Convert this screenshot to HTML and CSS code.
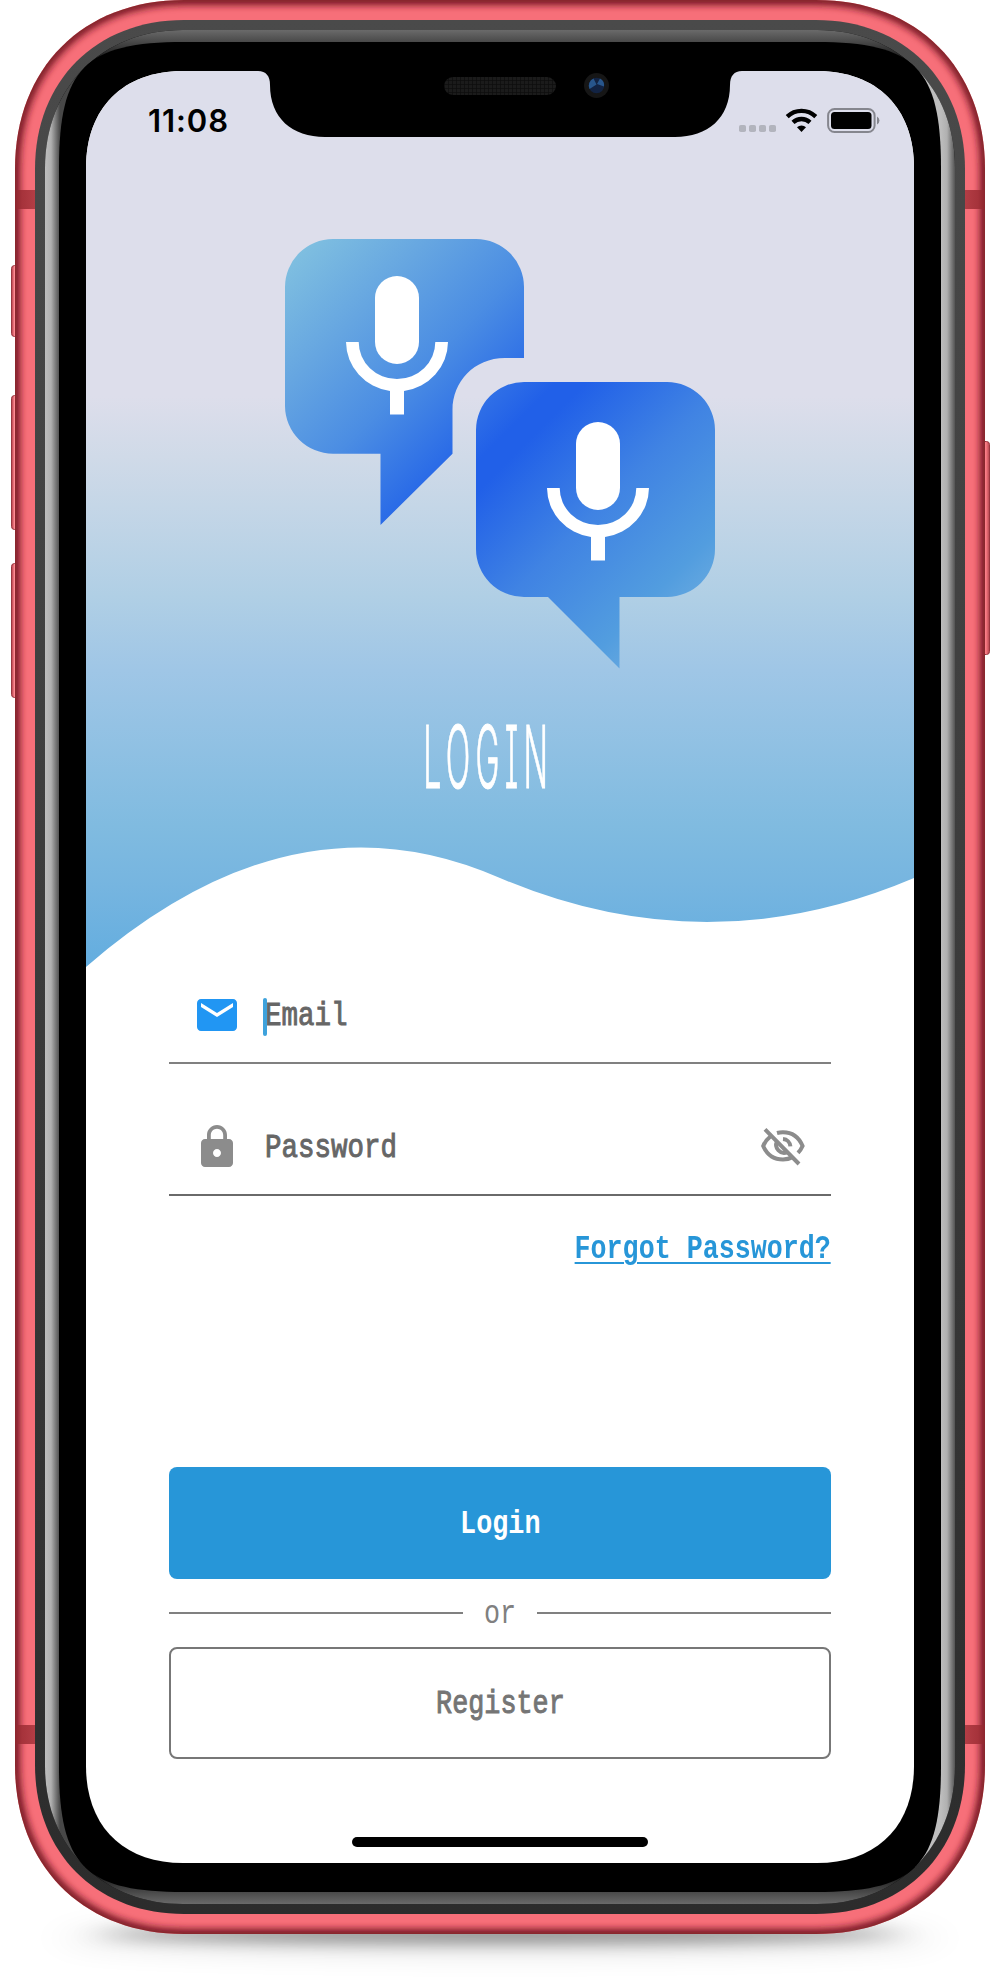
FILE: index.html
```html
<!DOCTYPE html>
<html lang="en">
<head>
<meta charset="utf-8">
<title>Login</title>
<link rel="stylesheet" href="styles.css">
</head>
<body>
<div class="phone">
  <svg class="frame" viewBox="0 0 1004 1986" aria-hidden="true">
    <defs>
      <linearGradient id="ring" x1="0" y1="0" x2="0" y2="1"><stop offset="0" stop-color="#4a4a4a"/><stop offset="1" stop-color="#2c2c2c"/></linearGradient>
      <linearGradient id="edgeL" gradientUnits="userSpaceOnUse" x1="45" y1="0" x2="60" y2="0"><stop offset="0" stop-color="#bdbdbd"/><stop offset=".4" stop-color="#b0b0b0"/><stop offset="1" stop-color="#484848"/></linearGradient>
      <linearGradient id="edgeR" gradientUnits="userSpaceOnUse" x1="941" y1="0" x2="956" y2="0"><stop offset="0" stop-color="#bdbdbd"/><stop offset=".4" stop-color="#b0b0b0"/><stop offset="1" stop-color="#484848"/></linearGradient>
      <linearGradient id="edgeT" gradientUnits="userSpaceOnUse" x1="0" y1="30" x2="0" y2="68"><stop offset="0" stop-color="#6a6a6a"/><stop offset=".32" stop-color="#484848"/><stop offset="1" stop-color="#000"/></linearGradient>
      <linearGradient id="edgeB" gradientUnits="userSpaceOnUse" x1="0" y1="1904" x2="0" y2="1866"><stop offset="0" stop-color="#6a6a6a"/><stop offset=".32" stop-color="#484848"/><stop offset="1" stop-color="#000"/></linearGradient>
      <linearGradient id="band" x1="0" y1="0" x2="1" y2="0"><stop offset="0" stop-color="#8c252d"/><stop offset=".35" stop-color="#a6333b"/><stop offset="1" stop-color="#b33d45"/></linearGradient>
      <linearGradient id="key" x1="0" y1="0" x2="1" y2="0"><stop offset="0" stop-color="#b5444e"/><stop offset=".2" stop-color="#d8606a"/><stop offset=".35" stop-color="#ff8f97"/><stop offset=".6" stop-color="#f5757f"/><stop offset="1" stop-color="#b0444d"/></linearGradient>
      <filter id="soft" x="-5%" y="-5%" width="110%" height="110%"><feGaussianBlur stdDeviation="3.6"/></filter>
      <filter id="shade" x="-20%" y="-200%" width="140%" height="500%"><feGaussianBlur stdDeviation="18 8"/></filter>
      <filter id="shadeWide" x="-20%" y="-200%" width="140%" height="500%"><feGaussianBlur stdDeviation="22 14"/></filter>
      <path id="body" d="M15 169C15 68 83 0 184 0H816C917 0 985 68 985 169V1765C985 1866 917 1934 816 1934H184C83 1934 15 1866 15 1765Z"/>
      <path id="lip" d="M45 168C45 87 102 30 183 30H817C898 30 955 87 955 168V1766C955 1847 898 1904 817 1904H183C102 1904 45 1847 45 1766Z"/>
      <clipPath id="bodyClip"><use href="#body"/></clipPath>
      <clipPath id="lipClip"><use href="#lip"/></clipPath>
      <pattern id="mesh" width="4" height="4" patternUnits="userSpaceOnUse"><rect width="4" height="4" fill="#1b1b1b"/><path d="M0 0H4M0 0V4" stroke="#0d0d0d" stroke-width="1.5"/></pattern>
    </defs>
    <ellipse cx="500" cy="1938" rx="440" ry="14" fill="#000" opacity=".12" filter="url(#shadeWide)"/>
    <ellipse cx="500" cy="1934" rx="400" ry="9" fill="#000" opacity=".4" filter="url(#shade)"/>
    <g fill="url(#key)" stroke="#9a3640">
      <rect x="11.5" y="265.5" width="8" height="71" rx="3"/>
      <rect x="11.5" y="395.5" width="8" height="134" rx="3"/>
      <rect x="11.5" y="563.5" width="8" height="134" rx="3"/>
      <rect x="981.5" y="441.5" width="8" height="213" rx="3"/>
    </g>
    <use href="#body" fill="#f76f79"/>
    <g clip-path="url(#bodyClip)">
      <use href="#body" fill="none" stroke="#741820" stroke-width="10" filter="url(#soft)"/>
      <rect x="15" y="190" width="20" height="19" fill="url(#band)"/>
      <rect x="15" y="1725" width="20" height="19" fill="url(#band)"/>
      <g transform="matrix(-1 0 0 1 1000 0)">
        <rect x="15" y="190" width="20" height="19" fill="url(#band)"/>
        <rect x="15" y="1725" width="20" height="19" fill="url(#band)"/>
      </g>
    </g>
    <path fill="url(#ring)" d="M35 169C35 81 96 20 184 20H816C904 20 965 81 965 169V1765C965 1853 904 1914 816 1914H184C96 1914 35 1853 35 1765Z"/>
    <g clip-path="url(#lipClip)">
      <rect x="45" y="30" width="910" height="1874" fill="#000"/>
      <path fill="url(#edgeT)" d="M90 72L40 20H960L910 72Z"/>
      <path fill="url(#edgeB)" d="M90 1862L40 1914H960L910 1862Z"/>
      <path fill="url(#edgeL)" d="M40 20L90 72V1862L40 1914Z"/>
      <path fill="url(#edgeR)" d="M960 20L910 72V1862L960 1914Z"/>
    </g>
    <path d="M59 168C59 68 85 42 184 42H816C915 42 941 68 941 168V1766C941 1866 915 1892 816 1892H184C85 1892 59 1866 59 1766Z"/>
  </svg>

  <main class="screen">
    <header class="hero">
      <div class="status">
        <span class="time">11:08</span>
        <svg class="status-icons" viewBox="0 0 142 26" aria-hidden="true">
          <g fill="#b2b4bd"><rect y="17" width="7" height="7" rx="1.8"/><rect x="10" y="17" width="7" height="7" rx="1.8"/><rect x="20" y="17" width="7" height="7" rx="1.8"/><rect x="30" y="17" width="7" height="7" rx="1.8"/></g>
          <g fill="none" stroke="#000" stroke-width="4.3"><path d="M48.2 8.6a20.500 20.500 0 0 1 28.600 0"/><path d="M54 14.400a12.300 12.300 0 0 1 17 0"/></g>
          <path d="M62.500 24l-4.500-4.700a6.500 6.500 0 0 1 9 0z"/>
          <rect x="89.100" y="1" width="46.500" height="23" rx="6.500" fill="none" stroke="#85868e" stroke-width="2"/>
          <rect x="92" y="4" width="40.500" height="17" rx="3.500"/>
          <path d="M138 8.500a4.500 4.500 0 0 1 0 8z" fill="#85868e"/>
        </svg>
      </div>
      <svg class="logo" viewBox="285 239 430 430" aria-hidden="true">
        <defs>
          <linearGradient id="bubbleBack" gradientUnits="userSpaceOnUse" x1="275" y1="275" x2="475" y2="475"><stop offset="0" stop-color="#7fbfe0"/><stop offset=".3" stop-color="#66a6e1"/><stop offset=".6" stop-color="#4b8de3"/><stop offset=".88" stop-color="#2b6ce7"/><stop offset="1" stop-color="#2160e8"/></linearGradient>
          <linearGradient id="bubbleFront" gradientUnits="userSpaceOnUse" x1="435" y1="435" x2="650" y2="650"><stop offset="0" stop-color="#3474e6"/><stop offset=".16" stop-color="#2160e8"/><stop offset=".23" stop-color="#2160e8"/><stop offset=".55" stop-color="#4083e3"/><stop offset=".88" stop-color="#529ddf"/><stop offset="1" stop-color="#65a8e0"/></linearGradient>
        </defs>
        <path fill="url(#bubbleBack)" d="M333 239H476A48 48 0 0 1 524 287V358H505C474 358 452.500 382 452.500 410V453.700L380.500 525V453.700H333A48 48 0 0 1 285 406V287A48 48 0 0 1 333 239Z"/>
        <path fill="url(#bubbleFront)" d="M524 382H667A48 48 0 0 1 715 430V549A48 48 0 0 1 667 597H619.500V668.500L548 597H524A48 48 0 0 1 476 549V430A48 48 0 0 1 524 382Z"/>
        <g id="mic" fill="#fff"><rect x="375" y="276" width="44" height="88" rx="22"/><path d="M346 342H358.700A38.300 37 0 0 0 435.300 342H448A51 50 0 0 1 404 391V414.500H390V391A51 50 0 0 1 346 342Z"/></g>
        <use href="#mic" x="201" y="146"/>
      </svg>
      <h1 class="title"><span>LOGIN</span></h1>
      <svg class="wave" viewBox="86 840 828 130" preserveAspectRatio="none" aria-hidden="true"><path fill="#fff" d="M86 967Q293 787 500 878Q707 966 914 878V971H86Z"/></svg>
    </header>

    <form class="form">
      <div class="field">
        <svg class="icon" viewBox="0 0 24 24" fill="#2196f3"><path d="M20 4H4c-1.100 0-1.990.9-1.990 2L2 18c0 1.100.9 2 2 2h16c1.100 0 2-.9 2-2V6c0-1.100-.9-2-2-2zm0 4l-8 5-8-5V6l8 5 8-5v2z"/></svg>
        <span class="mono medium label">Email</span><i class="caret"></i>
      </div>
      <div class="field second">
        <svg class="icon" viewBox="0 0 24 24" fill="#8c8c8c"><path d="M18 8h-1V6c0-2.760-2.240-5-5-5S7 3.240 7 6v2H6c-1.100 0-2 .9-2 2v10c0 1.100.9 2 2 2h12c1.100 0 2-.9 2-2V10c0-1.100-.9-2-2-2zm-6 9c-1.100 0-2-.9-2-2s.9-2 2-2 2 .9 2 2-.9 2-2 2zm3.100-9H8.900V6c0-1.710 1.390-3.100 3.100-3.100 1.710 0 3.100 1.390 3.100 3.100v2z"/></svg>
        <span class="mono medium label">Password</span>
        <svg class="icon eye" viewBox="0 0 24 24" fill="none" stroke="#8c8c8c" stroke-width="2"><path d="M9 5a11 11 0 0 1 3-.4c4.500 0 8 2.600 9.800 6.900a11 11 0 0 1-2.300 3.400M5.800 6.600A12 12 0 0 0 2.100 11.500C4 15.800 7.500 18.200 12 18.200c1.700 0 3.200-.3 4.600-1M3 3.200L20 20.500"/><path d="M12 8a4 4 0 0 1 3.700 3.700M9 9.200a4 4 0 0 0 5.200 5.400"/></svg>
      </div>
      <a class="mono bold forgot">Forgot Password?</a>
      <button type="button" class="button primary"><span class="mono bold">Login</span></button>
      <div class="divider"><span class="mono">or</span></div>
      <button type="button" class="button outline"><span class="mono medium">Register</span></button>
    </form>
    <div class="home"></div>
  </main>

  <svg class="frame" viewBox="0 0 1004 1986" aria-hidden="true">
    <path d="M258 70V71C266 71 270 76 270 85C270 118 292 137 325 137H675C708 137 730 118 730 85C730 76 734 71 742 71V70Z"/>
    <rect x="444" y="77" width="112" height="18" rx="9" fill="url(#mesh)"/>
    <circle cx="596.500" cy="85.500" r="12.500" fill="#161616"/>
    <circle cx="596.500" cy="85.500" r="7.800" fill="#122343"/>
    <path d="M589.500 89a7.800 7.800 0 0 1 4-10.500l3 6zM597 84l3-5.500a7.800 7.800 0 0 1 4 8z" fill="#28568c"/>
  </svg>
</div>
</body>
</html>
```
FILE: styles.css
```css
* { box-sizing: border-box; }

body {
  margin: 0;
  background: #fff;
}

.phone {
  position: relative;
  width: 1004px;
  height: 1986px;
  padding: 71px 90px 0 86px;
  overflow: hidden;
}

.frame {
  position: absolute;
  inset: 0;
  width: 1004px;
  height: 1986px;
}

.screen {
  position: relative;
  display: flex;
  flex-direction: column;
  width: 828px;
  height: 1792px;
  background: #fff;
  clip-path: path("M0 97C0 37 37 0 97 0H731C791 0 828 37 828 97V1695C828 1755 791 1792 731 1792H97C37 1792 0 1755 0 1695Z");
}

.hero {
  display: flex;
  flex-direction: column;
  align-items: center;
  height: 899px;
  background: linear-gradient(#dddeeb 0, #dddeeb 325px, #d0dae8 385px, #b0cfe5 525px, #9fc6e6 600px, #80bbe0 755px, #76b5e0 815px, #63addf 896px);
}

.status {
  display: flex;
  align-items: center;
  justify-content: space-between;
  width: 100%;
  height: 98px;
  padding: 2px 33px 0 62px;
}

.time {
  font: 600 31px/38px Inter, sans-serif;
  letter-spacing: .9px;
  color: #000;
}

.status-icons { width: 142px; height: 26px; }

.logo {
  width: 430px;
  height: 430px;
  margin-top: 70px;
}

.title {
  margin: 33px 0 0;
  height: 110px;
  width: 122px;
  display: flex;
  justify-content: center;
  font: 300 86px/110px Inter, sans-serif;
  font-feature-settings: "cv08", "ss02";
  letter-spacing: 14px;
  color: #fff;
}

.title span {
  transform: translateX(-12px) scaleX(.375);
  -webkit-text-stroke: 1px #fff;
}

.wave {
  width: 828px;
  height: 130px;
  margin-top: auto;
}

.form {
  display: flex;
  flex-direction: column;
  width: 662px;
  margin: 0 auto;
}

.mono {
  display: inline-block;
  font: 400 33.5px/44px "Liberation Mono", monospace;
  transform: translateY(1px) scaleX(.8);
}

.medium { -webkit-text-stroke: 1px currentColor; }
.bold { font-weight: 700; }

.field {
  position: relative;
  display: flex;
  align-items: center;
  height: 94px;
  padding: 0 22px 2px 24px;
  border-bottom: 2px solid #808080;
  color: #666;
}

.second {
  height: 132px;
  padding: 38px 24px 2px 24px;
  border-color: #6a6a6a;
}

.icon { width: 48px; height: 48px; flex: none; }
.eye { margin-left: auto; }

.label {
  margin-left: 24px;
  transform: translateY(1px) scaleX(.82);
  transform-origin: left;
}

.caret {
  position: absolute;
  left: 94px;
  top: 28px;
  width: 4px;
  height: 38px;
  border-radius: 2px;
  background: #3ea2dc;
}

.forgot {
  align-self: flex-end;
  margin-top: 31px;
  line-height: 44px;
  transform: scaleX(.796);
  transform-origin: right;
  color: #2796d8;
  text-decoration: underline;
  text-decoration-thickness: 2px;
  text-underline-offset: 4px;
}

.button {
  height: 112px;
  padding: 0;
  border: 0;
  border-radius: 8px;
  color: #fff;
  background: #2796d8;
}

.primary { margin-top: 196px; }

.divider {
  display: flex;
  align-items: center;
  height: 68px;
  color: #808080;
}

.divider::before,
.divider::after {
  content: "";
  flex: 1;
  height: 2px;
  background: #808080;
}

.divider span { width: 74px; text-align: center; }

.outline {
  border: 2px solid #777;
  background: #fff;
  color: #757575;
}

.home {
  width: 296px;
  height: 10px;
  margin: auto auto 16px;
  border-radius: 5px;
  background: #000;
}
```
